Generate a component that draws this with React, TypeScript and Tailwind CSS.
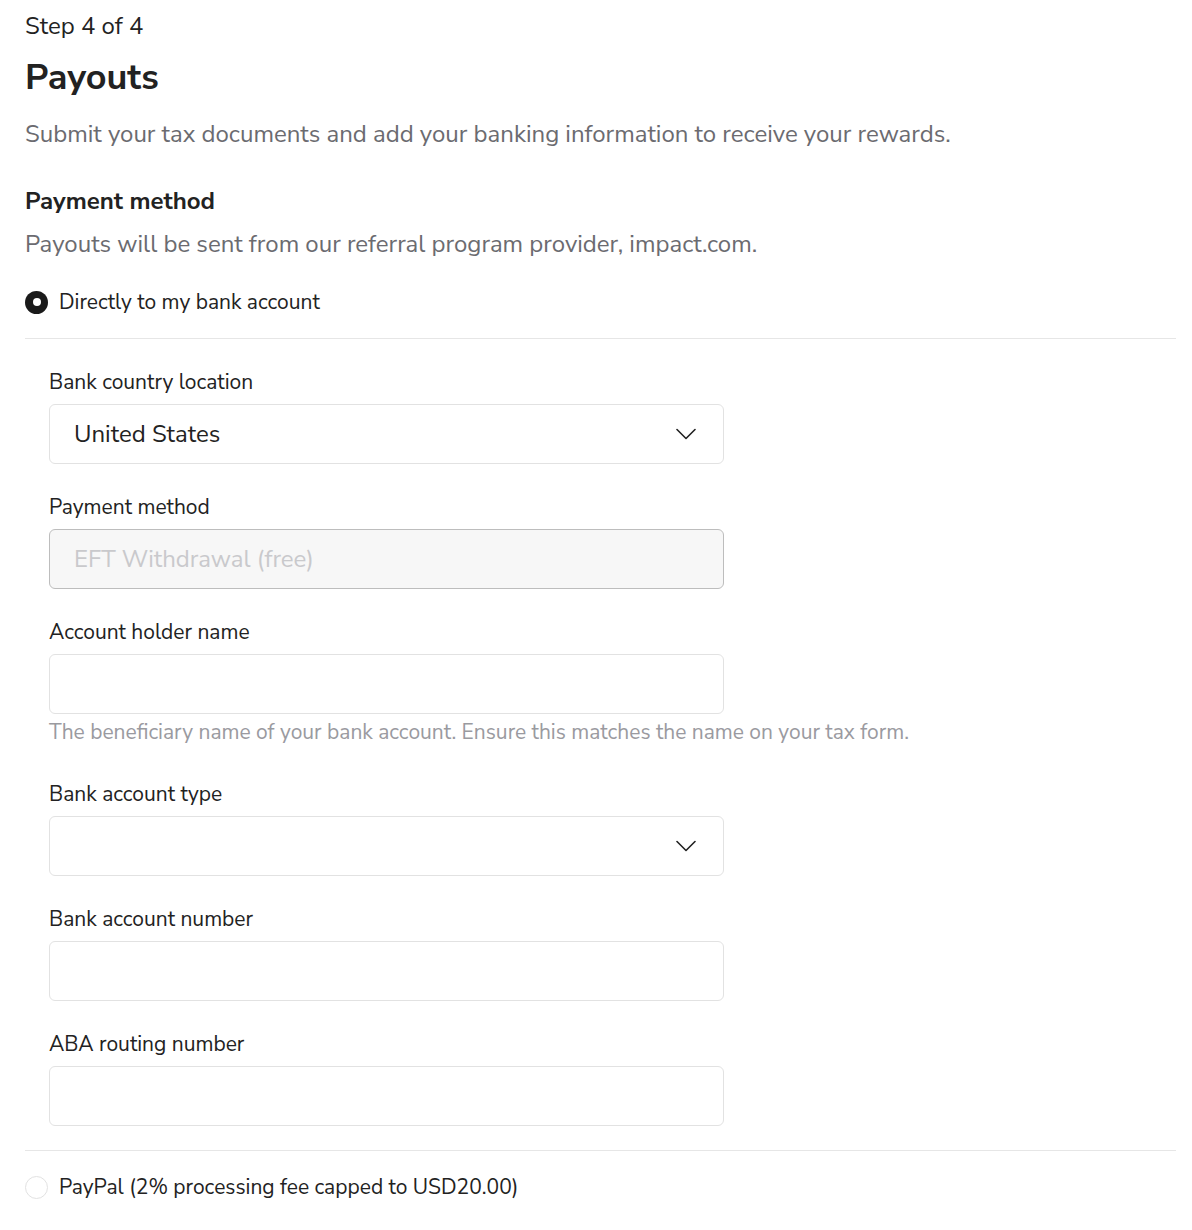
import React from "react";

const font = { fontFamily: "'Nunito Sans', 'Open Sans', 'Noto Sans', sans-serif" };

function Chevron() {
  return (
    <svg width="20" height="12" viewBox="0 0 20 12" fill="none" className="shrink-0">
      <path d="M1 1.5 L10 10.5 L19 1.5" stroke="#222" strokeWidth="1.6" strokeLinecap="round" strokeLinejoin="round" />
    </svg>
  );
}

function Field({ label, children }: { label: string; children: React.ReactNode }) {
  return (
    <div className="flex flex-col">
      <div className="text-[21px] leading-[30px] text-[#222] mb-[7px]">{label}</div>
      {children}
    </div>
  );
}

function TextBox() {
  return <div className="h-[60px] w-[675px] rounded-[6px] border border-[#e2e2e2] bg-white" />;
}

function SelectBox({ value }: { value?: string }) {
  return (
    <div className="h-[60px] w-[675px] rounded-[6px] border border-[#e2e2e2] bg-white flex items-center justify-between pl-[24px] pr-[27px]">
      <span className="text-[24px] text-[#222]">{value}</span>
      <Chevron />
    </div>
  );
}

function Radio({ checked, label }: { checked?: boolean; label: string }) {
  return (
    <div className="flex items-center h-[32px] gap-[11px]">
      {checked ? (
        <span className="w-[23px] h-[23px] rounded-full bg-[#1a1a1a] flex items-center justify-center">
          <span className="w-[8px] h-[8px] rounded-full bg-white" />
        </span>
      ) : (
        <span className="w-[23px] h-[23px] rounded-full border border-[#e2e2e2] bg-white" />
      )}
      <span className="text-[21px] pt-[2px] text-[#222]">{label}</span>
    </div>
  );
}

export default function App() {
  return (
    <div className="min-h-screen w-full bg-white pl-[25px] pr-[16px] pt-[10px]" style={font}>
      <div className="text-[24px] leading-[32px] text-[#222]">Step 4 of 4</div>
      <h1 className="mt-[14px] text-[36px] leading-[44px] font-bold text-[#222]">Payouts</h1>
      <p className="mt-[18px] text-[24px] leading-[32px] text-[#6b6b70]">
        Submit your tax documents and add your banking information to receive your rewards.
      </p>
      <h2 className="mt-[35px] text-[24px] leading-[32px] font-bold text-[#222]">Payment method</h2>
      <p className="mt-[11px] text-[24px] leading-[32px] text-[#6b6b70]">
        Payouts will be sent from our referral program provider, impact.com.
      </p>

      <div className="mt-[26px]">
        <Radio checked label="Directly to my bank account" />
      </div>

      <div className="mt-[20px] border-t border-[#e6e6e6] pt-[28px] pl-[24px] pb-[24px] flex flex-col">
        <Field label="Bank country location">
          <SelectBox value="United States" />
        </Field>
        <div className="mt-[28px]">
          <Field label="Payment method">
            <div className="h-[60px] w-[675px] rounded-[6px] border border-[#bdbdbd] bg-[#f7f7f7] flex items-center pl-[24px]">
              <span className="text-[24px] text-[#c9c9cc]">EFT Withdrawal (free)</span>
            </div>
          </Field>
        </div>
        <div className="mt-[28px]">
          <Field label="Account holder name">
            <TextBox />
          </Field>
          <p className="mt-[4px] text-[21px] leading-[28px] text-[#9a9aa0]">
            The beneficiary name of your bank account. Ensure this matches the name on your tax form.
          </p>
        </div>
        <div className="mt-[33px]">
          <Field label="Bank account type">
            <SelectBox />
          </Field>
        </div>
        <div className="mt-[28px]">
          <Field label="Bank account number">
            <TextBox />
          </Field>
        </div>
        <div className="mt-[28px]">
          <Field label="ABA routing number">
            <TextBox />
          </Field>
        </div>
      </div>

      <div className="border-t border-[#e6e6e6] pt-[20px]">
        <Radio label="PayPal (2% processing fee capped to USD20.00)" />
      </div>
    </div>
  );
}
